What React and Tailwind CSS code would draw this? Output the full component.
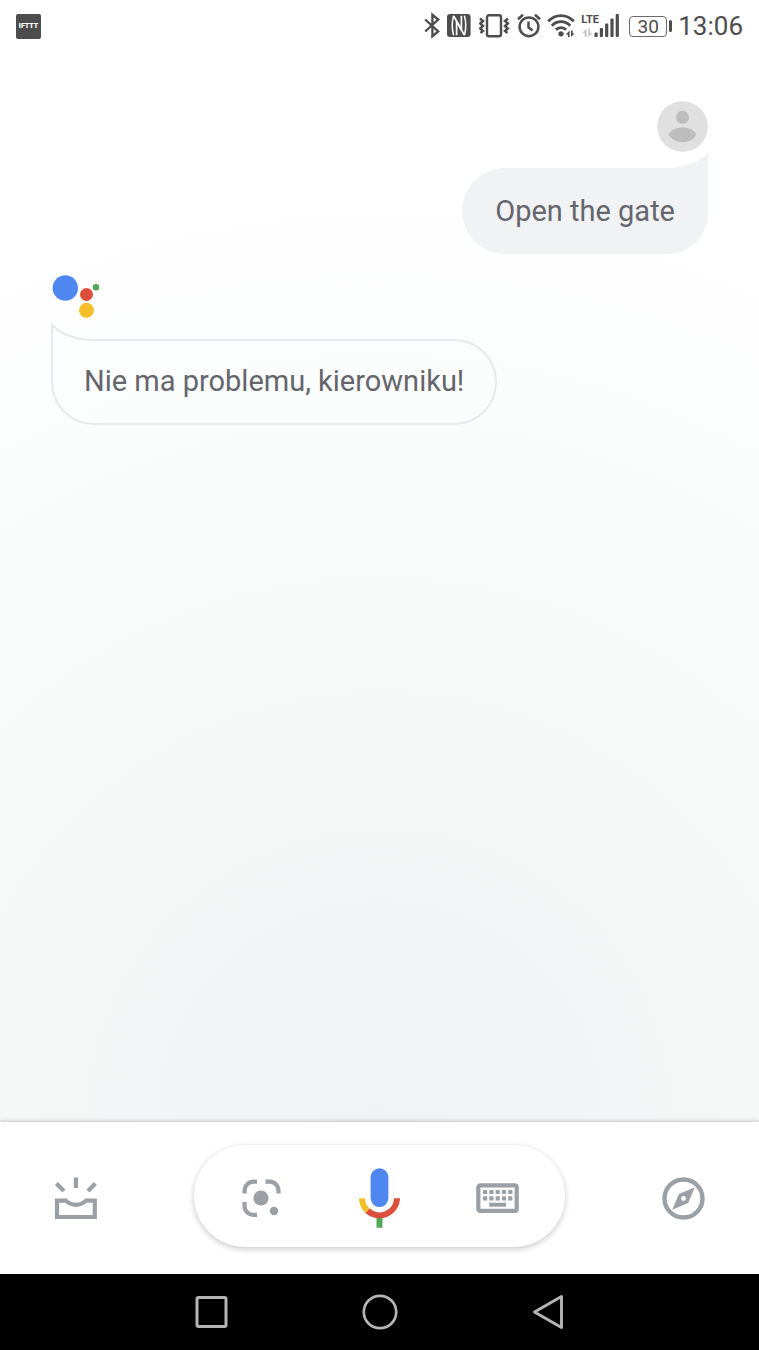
import React from 'react';

const StatusBar = () => (
    <header className="flex h-[52px] items-center justify-between bg-white px-4 text-[#4d4d4d]">
        <div className="flex h-[25px] w-[25px] items-center justify-center rounded-xs bg-[#4d4d4d]">
            <span className="text-[7px] leading-none font-black text-white">IFTTT</span>
        </div>

        <div className="flex items-center gap-1.5">
            {/* Bluetooth */}
            <svg width="17" height="28" viewBox="0 0 17 28" fill="none" stroke="currentColor" strokeWidth="2.3">
                <path d="M1.2 7.5 14.2 19.4 8.4 24.2V2.8l5.8 4.8L1.2 19.5" />
            </svg>
            {/* NFC */}
            <svg width="26" height="28" viewBox="0 0 26 28" fill="none" stroke="#fff">
                <rect x="0" y="2" width="23.6" height="23" rx="3" fill="currentColor" stroke="none" />
                <path d="M6.6 3.6C5 9.500 5 17.500 6.600 23.400" strokeWidth="1.5" />
                <path d="M17.400 3.600C19 9.500 19 17.500 17.400 23.400" strokeWidth="1.5" />
                <path d="M6.800 4.200 14.400 18V3.800" strokeWidth="1.700" />
                <path d="M9.600 23.200V9.200L17.200 22.800" strokeWidth="1.700" />
            </svg>
            {/* Vibrate */}
            <svg width="32" height="28" viewBox="0 0 32 28" fill="none" stroke="currentColor">
                <rect x="8" y="3.2" width="14" height="21" rx="2" strokeWidth="2.4" />
                <path d="M1 6.500 4 9 1.200 11.500 4 14 1.200 16.500 4 19 1.500 21" strokeWidth="2.4" />
                <path d="M29 6.500 26 9 28.800 11.500 26 14 28.800 16.500 26 19 28.500 21" strokeWidth="2.4" />
            </svg>
            {/* Alarm */}
            <svg width="24" height="28" viewBox="0 0 24 28" fill="none" stroke="currentColor" strokeWidth="2.5">
                <circle cx="12" cy="14.800" r="9.400" />
                <path d="M1 7.200 6 2.800M18 2.800l5 4.400" />
                <path d="M11.500 9.500v5.800l4 3.200" />
            </svg>
            {/* Wi-Fi */}
            <svg width="28" height="28" viewBox="0 0 28 28" fill="none" stroke="currentColor" strokeWidth="2.8">
                <path d="M1.200 9.300C8.500 1.600 19.500 1.600 26.800 9.300" />
                <path d="M4.800 13.700C10 8.300 18 8.300 23.200 13.700" />
                <path d="M8.800 17.800C11.800 14.800 16.200 14.800 19.200 17.800" />
                <circle cx="14" cy="21.800" r="2.600" fill="currentColor" stroke="none" />
                <path d="M22.600 18.500v6.500h-1.700v-2.500h-2.200zM24 18.500v6.500l3.700-3.500H25.700v-3z" fill="currentColor" stroke="none" />
            </svg>
            {/* Mobile signal */}
            <div className="relative h-7 w-[42px]">
                <svg width="42" height="28" viewBox="0 0 42 28" fill="currentColor">
                    <path d="M5.600 16.500v8.500H3.600v-4H1zM7.200 16.500v8.500l4-4H9.200v-4.500z" fill="#c9c9c9" />
                    <rect x="13.500" y="20.500" width="3.2" height="4.500" rx="1" />
                    <rect x="18.800" y="16" width="3.2" height="9" rx="1" />
                    <rect x="24.100" y="11.500" width="3.2" height="13.500" rx="1" />
                    <rect x="29.400" y="6.500" width="3.2" height="18.500" rx="1" />
                    <rect x="34.700" y="2" width="3.2" height="23" rx="1" />
                </svg>
                <span className="absolute top-0.5 left-0 text-[11px] leading-none font-bold">LTE</span>
            </div>
            {/* Battery */}
            <div className="flex w-[43px] items-center gap-0.5">
                <span className="flex h-[21px] flex-1 items-center justify-center rounded-sm border border-[#6b6b6b] text-[19px] leading-none">30</span>
                <span className="h-3 w-[3px] rounded-xs bg-[#4d4d4d]" />
            </div>
            <time className="text-[26px] leading-none">13:06</time>
        </div>
    </header>
);

const Conversation = () => (
    <main className="flex flex-1 flex-col bg-[radial-gradient(circle_950px_at_50%_100%,#f1f2f3,#f7f9f9_50%,#ffffff)] px-[51px] pt-[49px] text-[29px] text-[#64666c]">
        {/* User message */}
        <div className="flex flex-col items-end gap-4">
            <svg width="51" height="51" viewBox="0 0 51 51">
                <circle cx="25.5" cy="25.5" r="25.3" fill="#e0e0e0" />
                <circle cx="25.5" cy="16.3" r="6.5" fill="#bdbdbd" />
                <path d="M11.800 33.500C15 24.300 36 24.300 39.200 33.500 35 43.700 16 43.700 11.800 33.500z" fill="#bdbdbd" />
            </svg>
            <div className="relative rounded-l-[43px] rounded-br-[40px] bg-[#f1f2f4] px-[33px] py-[23px] leading-10">
                <svg className="absolute -top-[15px] right-0" width="44" height="16" viewBox="0 0 44 16">
                    <path d="M0 15.200C18 15.200 33 10.500 44 0V16H0z" fill="#f1f2f4" />
                </svg>
                Open the gate
            </div>
        </div>

        {/* Assistant reply */}
        <div className="mt-5 flex flex-col items-start gap-5">
            <svg width="51" height="45" viewBox="0 0 51 45">
                <circle cx="14.3" cy="14" r="12.7" fill="#4f87f0" />
                <circle cx="35.5" cy="20.5" r="6.5" fill="#dc4f3c" />
                <circle cx="45" cy="13.2" r="3.3" fill="#54a85a" />
                <circle cx="35.5" cy="36.3" r="7.5" fill="#f5bf2c" />
            </svg>
            <div className="relative rounded-r-[43px] rounded-bl-[43px] border-2 border-[#e8e9ec] px-[31px] pt-5 pb-[22px] leading-10">
                <svg className="absolute -top-[18px] -left-0.5" width="44" height="20" viewBox="0 0 44 20">
                    <path d="M1 2C11 12 24 17 43 17V20H1z" fill="#fcfdfd" />
                    <path d="M1 20V2C11 12 24 17 44 17" fill="none" stroke="#e8e9ec" strokeWidth="2" />
                </svg>
                Nie ma problemu, kierowniku!
            </div>
        </div>
    </main>
);

const AssistantBar = () => (
    <div className="relative flex items-center justify-between bg-white px-[54px] pt-[23px] pb-[27px] text-[#9aa0a6] shadow-[0_-1px_4px_rgba(0,0,0,0.2)]">
        <button aria-label="Updates" className="pt-1">
            <svg width="43" height="43" viewBox="0 0 43 43" fill="none" stroke="currentColor" strokeWidth="4.2">
                <path d="M21.900 .5V11M2.400 6.500l7.500 7.500M41.400 6.500l-7.500 7.500" />
                <path d="M3 23.600H11.900C17.400 29.200 26.400 29.200 31.900 23.600H40.800V40H3z" />
            </svg>
        </button>

        <div className="flex h-[102px] w-[57%] items-center justify-between rounded-full bg-white px-[46px] pt-1 shadow-[0_2px_6px_rgba(0,0,0,0.22)]">
            <button aria-label="Lens">
                <svg width="43" height="43" viewBox="0 0 43 43" fill="none" stroke="currentColor" strokeWidth="4.2">
                    <path d="M4.600 16.500V13.500a9 9 0 0 1 9-8.800H17M25.500 4.700H29.500a9 9 0 0 1 9 8.800V16.500M4.600 25V29.500a8.500 8.500 0 0 0 9 8.300H17" />
                    <circle cx="21" cy="21" r="7.6" fill="currentColor" stroke="none" />
                    <circle cx="34" cy="34" r="4.2" fill="currentColor" stroke="none" />
                </svg>
            </button>
            <button aria-label="Speak">
                <svg width="43" height="60" viewBox="0 0 43 60" fill="none" strokeWidth="6">
                    <rect x="12.6" y="0.3" width="17.8" height="38.7" rx="8.9" fill="#4f87f0" />
                    <path d="M21.500 49V59.800" stroke="#54a85a" />
                    <path d="M9.500 42.500A17.500 17.500 0 0 0 39 30.200" stroke="#dc4f3c" />
                    <path d="M4 30.200A17.500 17.500 0 0 0 9.500 42.700" stroke="#f5bf2c" />
                </svg>
            </button>
            <button aria-label="Keyboard">
                <svg width="43" height="43" viewBox="0 0 43 43" fill="none" stroke="currentColor">
                    <rect x="2.300" y="8.300" width="38.400" height="25.600" rx="2" strokeWidth="4.2" />
                    <path d="M7 15H37M7 21.300H37" strokeWidth="4.2" strokeDasharray="4.2 2.1" />
                    <path d="M13.200 27.700H30" strokeWidth="4" />
                </svg>
            </button>
        </div>

        <button aria-label="Explore" className="pt-1">
            <svg width="43" height="43" viewBox="0 0 43 43">
                <circle cx="21.5" cy="21.5" r="19" fill="none" stroke="currentColor" strokeWidth="4.4" />
                <path d="M32.800 10.200 26.200 26 10.200 32.800 17 17z" fill="currentColor" />
                <circle cx="21.5" cy="21.5" r="2.4" fill="#fff" />
            </svg>
        </button>
    </div>
);

const SystemNav = () => (
    <nav className="flex h-[76px] items-center justify-center gap-[132px] bg-black text-[#b5b5b5]">
        <button aria-label="Recent apps">
            <svg width="36" height="36" viewBox="0 0 36 36" fill="none" stroke="currentColor" strokeWidth="3">
                <rect x="3" y="3.5" width="29" height="29" rx="1.5" />
            </svg>
        </button>
        <button aria-label="Home">
            <svg width="36" height="36" viewBox="0 0 36 36" fill="none" stroke="currentColor" strokeWidth="2.7">
                <circle cx="18" cy="18" r="16.2" />
            </svg>
        </button>
        <button aria-label="Back">
            <svg width="36" height="36" viewBox="0 0 36 36" fill="none" stroke="currentColor" strokeWidth="2.9" strokeLinejoin="round">
                <path d="M31.500 2.500V33.500L4.500 18z" />
            </svg>
        </button>
    </nav>
);

const App = () => (
    <div className="flex min-h-screen flex-col bg-white font-['Roboto',sans-serif]">
        <StatusBar />
        <Conversation />
        <AssistantBar />
        <SystemNav />
    </div>
);

export default App;
